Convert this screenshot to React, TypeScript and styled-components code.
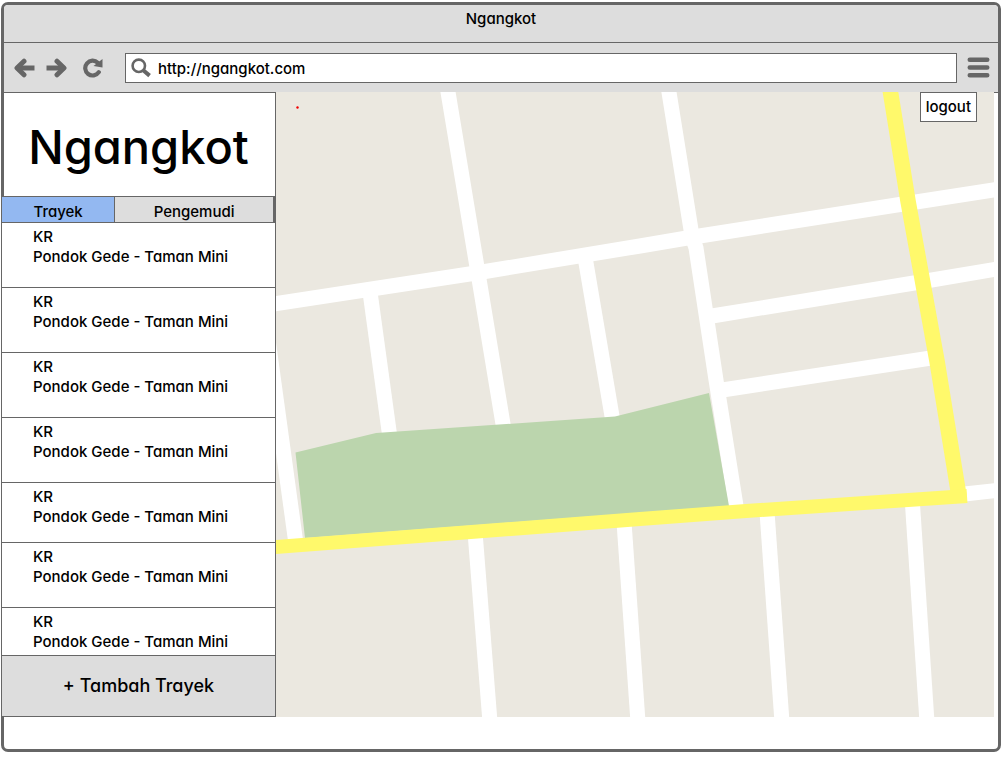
import React, { useState } from "react";
import styled, { createGlobalStyle } from "styled-components";

const INK = "#666666";
const PANEL = "#dddddd";

const GlobalStyle = createGlobalStyle`
  *, *::before, *::after { box-sizing: border-box; }
  body {
    margin: 0;
    background: #ffffff;
    color: #000000;
    font-family: Inter, "Noto Sans", sans-serif;
    font-size: 15px;
    font-weight: 500;
    line-height: 20px;
    font-feature-settings: "cv11" 1;
  }
  button, input { font: inherit; color: inherit; font-feature-settings: inherit; }
`;

const Page = styled.div`
  display: flex;
  min-height: 100vh;
  padding: 2px 4px 6px 1px;
`;

const BrowserWindow = styled.div`
  flex: 1;
  min-width: 0;
  display: flex;
  flex-direction: column;
  border: 3px solid ${INK};
  border-radius: 7px;
  background: #ffffff;
`;

const TitleBar = styled.header`
  height: 38px;
  padding-top: 4px;
  border-bottom: 1px solid ${INK};
  border-radius: 4px 4px 0 0;
  background: ${PANEL};
  text-align: center;
`;

const Toolbar = styled.div`
  display: flex;
  align-items: center;
  height: 50px;
  padding: 0 8px 0 10px;
  border-bottom: 1px solid ${INK};
  background: ${PANEL};
`;

const IconButton = styled.button<{ $gap: number }>`
  display: flex;
  margin: 0 ${(p) => p.$gap}px 0 0;
  padding: 0;
  border: 0;
  background: none;
  color: ${INK};
  cursor: pointer;
`;

const AddressBar = styled.label`
  flex: 1;
  min-width: 0;
  display: flex;
  align-items: center;
  gap: 6px;
  height: 30px;
  margin-right: 10px;
  padding: 0 5px;
  border: 1px solid ${INK};
  background: #ffffff;
  color: ${INK};
`;

const AddressInput = styled.input`
  flex: 1;
  min-width: 0;
  padding: 2px 0 0;
  border: 0;
  outline: 0;
  background: none;
  color: #000000;
`;

const Content = styled.main`
  display: flex;
  padding: 0 4px 32px 0;
`;

const Sidebar = styled.aside`
  flex: none;
  width: 272px;
  border-right: 1px solid ${INK};
`;

const Logo = styled.h1`
  display: flex;
  align-items: center;
  justify-content: center;
  height: 103px;
  margin: 0;
  padding: 4px 2px 0 0;
  font-size: 47px;
  line-height: 60px;
  font-weight: 500;
`;

const SidebarBody = styled.div`
  margin-left: -2px;
  background: #ffffff;
`;

const Tabs = styled.div`
  display: flex;
  height: 27px;
  border: solid ${INK};
  border-width: 1px 1px 1px 0;
`;

const Tab = styled.button<{ $active: boolean; $grow: number }>`
  flex: ${(p) => p.$grow} 1 0;
  padding: 4px 0 0;
  border: 0;
  border-right: 1px solid ${INK};
  background: ${(p) => (p.$active ? "#93b8f1" : PANEL)};
  cursor: pointer;
`;

const RouteList = styled.ul`
  margin: 0;
  padding: 0;
  list-style: none;
`;

const RouteItem = styled.li<{ $height: number }>`
  height: ${(p) => p.$height}px;
  padding: 4px 12px 0 31px;
  border-bottom: 1px solid ${INK};
  white-space: nowrap;
`;

const RouteLine = styled.div``;

const AddButton = styled.button`
  display: block;
  width: 100%;
  height: 61px;
  padding: 0;
  border: 0;
  border-bottom: 1px solid ${INK};
  background: ${PANEL};
  font-size: 18px;
  cursor: pointer;
`;

const MapArea = styled.section`
  position: relative;
  flex: 1;
  min-width: 0;
  margin-top: -1px;
`;

const MapCanvas = styled.svg`
  display: block;
  width: 100%;
  height: 100%;
`;

const LogoutButton = styled.button`
  position: absolute;
  top: 0;
  right: 17px;
  height: 30px;
  padding: 0 5px 1px;
  border: 1px solid ${INK};
  background: #ffffff;
  cursor: pointer;
`;

const ArrowIcon = ({ flip }: { flip?: boolean }) => (
  <svg width="21" height="20" viewBox="0 0 21 20" fill="none" stroke="currentColor" strokeWidth="5" aria-hidden="true">
    <path d={flip ? "M0.500 10H16" : "M20.500 10H5"} />
    <path d={flip ? "M11 3.200L18 10L11 16.800" : "M10 3.200L3 10L10 16.800"} strokeLinecap="round" strokeLinejoin="round" />
  </svg>
);

const ReloadIcon = () => (
  <svg width="22" height="20" viewBox="0 0 22 20" aria-hidden="true">
    <path d="M16.800 14.200A7.400 7.400 0 1 1 15.800 4.800" fill="none" stroke="currentColor" strokeWidth="4.200" strokeLinecap="round" />
    <path d="M20.500 1V9.500L11.500 8Z" fill="currentColor" />
  </svg>
);

const SearchIcon = () => (
  <svg width="21" height="20" viewBox="0 0 21 20" fill="none" stroke="currentColor" aria-hidden="true">
    <circle cx="7.8" cy="7.8" r="6.2" strokeWidth="2.6" />
    <path d="M12.5 12.5L18.6 17.6" strokeWidth="4" />
  </svg>
);

const MenuIcon = () => (
  <svg width="23" height="21" viewBox="0 0 23 21" stroke="currentColor" strokeWidth="4.6" strokeLinecap="round" aria-hidden="true">
    <path d="M2.8 2.8H20.2M2.8 10.5H20.2M2.8 18.2H20.2" />
  </svg>
);

const CityMap = () => (
  <MapCanvas viewBox="0 0 718 625" preserveAspectRatio="xMidYMid slice" role="img" aria-label="Map">
    <rect width="718" height="625" fill="#ebe8e0" />
    <g fill="none" stroke="#ffffff" strokeWidth="15">
      <path d="M171 -6L201 175L204 193L228 338" />
      <path d="M-6 212.500L200 181L364 154L414 145.500L627 112L724 97" />
      <path d="M94 200L114 346" />
      <path d="M309 165L337 330" />
      <path d="M392 -6L416 144L420 156L440 288L461 420" />
      <path d="M433 224.500L638 191L724 176.500" />
      <path d="M443 298.500L655 266" />
      <path d="M-9 240L20 452" />
      <path d="M684 402.500L724 398" />
      <path d="M199 440L214 630" />
      <path d="M348 430L362 630" />
      <path d="M491 420L506 630" />
      <path d="M636 405L651 630" />
    </g>
    <path d="M19.500 360.500L100 341L339 324.500L433 301L453 414L29 446Z" fill="#bbd5ad" />
    <g fill="none" stroke="#fff96b">
      <path d="M613.500 -6L632 109L661 269L683 404" strokeWidth="15.500" />
      <path d="M-6 455.500L364 427L470 419L691 404" strokeWidth="14" />
    </g>
    <circle cx="21.500" cy="15.500" r="1.200" fill="#f00000" />
  </MapCanvas>
);

const routes = [65, 65, 65, 65, 60, 65, 48].map((height, id) => ({
  id,
  height,
  code: "KR",
  name: "Pondok Gede - Taman Mini",
}));

export default function App() {
  const [tab, setTab] = useState("Trayek");
  const [url, setUrl] = useState("http://ngangkot.com");

  return (
    <Page>
      <GlobalStyle />
      <BrowserWindow>
        <TitleBar>Ngangkot</TitleBar>
        <Toolbar>
          <IconButton $gap={11} aria-label="Back"><ArrowIcon /></IconButton>
          <IconButton $gap={15} aria-label="Forward"><ArrowIcon flip /></IconButton>
          <IconButton $gap={21} aria-label="Reload"><ReloadIcon /></IconButton>
          <AddressBar>
            <SearchIcon />
            <AddressInput aria-label="Address" value={url} onChange={(e) => setUrl(e.target.value)} />
          </AddressBar>
          <IconButton $gap={0} aria-label="Menu"><MenuIcon /></IconButton>
        </Toolbar>
        <Content>
          <Sidebar>
            <Logo>Ngangkot</Logo>
            <SidebarBody>
              <Tabs role="tablist">
                <Tab role="tab" $grow={113} $active={tab === "Trayek"} aria-selected={tab === "Trayek"} onClick={() => setTab("Trayek")}>Trayek</Tab>
                <Tab role="tab" $grow={159} $active={tab === "Pengemudi"} aria-selected={tab === "Pengemudi"} onClick={() => setTab("Pengemudi")}>Pengemudi</Tab>
              </Tabs>
              <RouteList>
                {routes.map((route) => (
                  <RouteItem key={route.id} $height={route.height}>
                    <RouteLine>{route.code}</RouteLine>
                    <RouteLine>{route.name}</RouteLine>
                  </RouteItem>
                ))}
              </RouteList>
              <AddButton>+ Tambah Trayek</AddButton>
            </SidebarBody>
          </Sidebar>
          <MapArea>
            <CityMap />
            <LogoutButton>logout</LogoutButton>
          </MapArea>
        </Content>
      </BrowserWindow>
    </Page>
  );
}
